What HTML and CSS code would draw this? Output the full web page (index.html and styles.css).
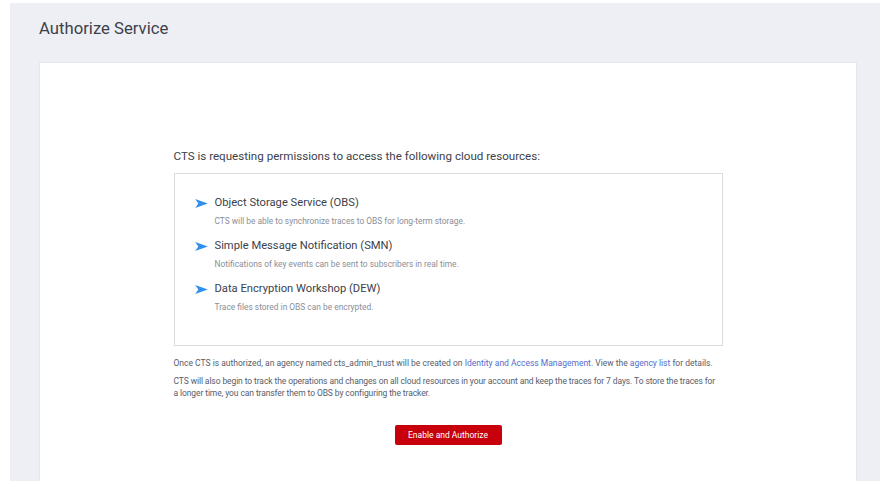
FILE: index.html
```html
<!DOCTYPE html>
<html lang="en">
<head>
<meta charset="utf-8">
<title>Authorize Service</title>
<link rel="stylesheet" href="styles.css">
</head>
<body>
<div class="page">
  <h1 class="page-title">Authorize Service</h1>
  <div class="card">
    <div class="auth">
      <p class="auth-lead">CTS is requesting permissions to access the following cloud resources:</p>
      <ul class="perm-box">
        <li class="perm">
          <div class="perm-head">
            <svg class="perm-icon" viewBox="0 0 14 10" width="14" height="10"><path d="M0 0 L14 5 L0 10 L3.5 5 Z" fill="#2f8ff0"/></svg>
            <span class="perm-name">Object Storage Service (OBS)</span>
          </div>
          <div class="perm-desc">CTS will be able to synchronize traces to OBS for long-term storage.</div>
        </li>
        <li class="perm">
          <div class="perm-head">
            <svg class="perm-icon" viewBox="0 0 14 10" width="14" height="10"><path d="M0 0 L14 5 L0 10 L3.5 5 Z" fill="#2f8ff0"/></svg>
            <span class="perm-name">Simple Message Notification (SMN)</span>
          </div>
          <div class="perm-desc">Notifications of key events can be sent to subscribers in real time.</div>
        </li>
        <li class="perm">
          <div class="perm-head">
            <svg class="perm-icon" viewBox="0 0 14 10" width="14" height="10"><path d="M0 0 L14 5 L0 10 L3.5 5 Z" fill="#2f8ff0"/></svg>
            <span class="perm-name">Data Encryption Workshop (DEW)</span>
          </div>
          <div class="perm-desc">Trace files stored in OBS can be encrypted.</div>
        </li>
      </ul>
      <p class="note">Once CTS is authorized, an agency named cts_admin_trust will be created on <a href="#">Identity and Access Management</a>. View the <a href="#">agency list</a> for details.</p>
      <p class="note">CTS will also begin to track the operations and changes on all cloud resources in your account and keep the traces for 7 days. To store the traces for a longer time, you can transfer them to OBS by configuring the tracker.</p>
      <div class="actions">
        <button class="btn-primary" type="button">Enable and Authorize</button>
      </div>
    </div>
  </div>
</div>
</body>
</html>
```

FILE: styles.css
```css
html, body {
  margin: 0;
  padding: 0;
  background: #ffffff;
  height: 100%;
  overflow: hidden;
}

body {
  font-family: Roboto, "Liberation Sans", Arial, sans-serif;
  color: #252b3a;
}

.page {
  margin: 3px 0 0 10px;
  background: #eeeff4;
  padding: 0 23px 0 29px;
  height: 478px;
  box-sizing: border-box;
  display: flex;
  flex-direction: column;
}

.page-title {
  margin: 0;
  padding: 16px 0 23px;
  font-size: 16.7px;
  line-height: 20px;
  font-weight: 400;
  color: #3d414a;
}

.card {
  flex: 1;
  background: #ffffff;
  border: 1px solid #e4e6ec;
  border-bottom: 0;
  padding: 85px 0 0;
}

.auth {
  width: 549px;
  margin: 0 auto;
}

.auth-lead {
  margin: 0 0 9px;
  font-size: 11.6px;
  line-height: 16px;
  color: #3d414a;
}

.perm-box {
  list-style: none;
  margin: 0;
  padding: 20px 20px 25px;
  border: 1px solid #d9dbe0;
  height: 173px;
  box-sizing: border-box;
}

.perm {
  margin-bottom: 10px;
}

.perm-head {
  display: flex;
  align-items: center;
  gap: 7px;
}

.perm-icon {
  flex: none;
  width: 13px;
  height: 9px;
}

.perm-name {
  font-size: 11.2px;
  line-height: 18px;
  color: #3d414a;
}

.perm-desc {
  margin: 3px 0 0 20px;
  font-size: 8.4px;
  line-height: 12px;
  color: #8a8e99;
}

.note {
  margin: 11px -4px 0 0;
  font-size: 8.5px;
  line-height: 12px;
  color: #575d6c;
}

.note + .note {
  margin: 6px 3px 0 0;
  letter-spacing: -0.1px;
}

.note a {
  color: #526ecc;
  text-decoration: none;
}

.actions {
  display: flex;
  justify-content: center;
  margin-top: 26px;
}

.btn-primary {
  border: 0;
  border-radius: 2px;
  background: #c7000b;
  color: #ffffff;
  font-family: Roboto, "Liberation Sans", Arial, sans-serif;
  font-size: 8.5px;
  height: 20px;
  width: 107px;
  padding: 0;
  cursor: pointer;
}
```
